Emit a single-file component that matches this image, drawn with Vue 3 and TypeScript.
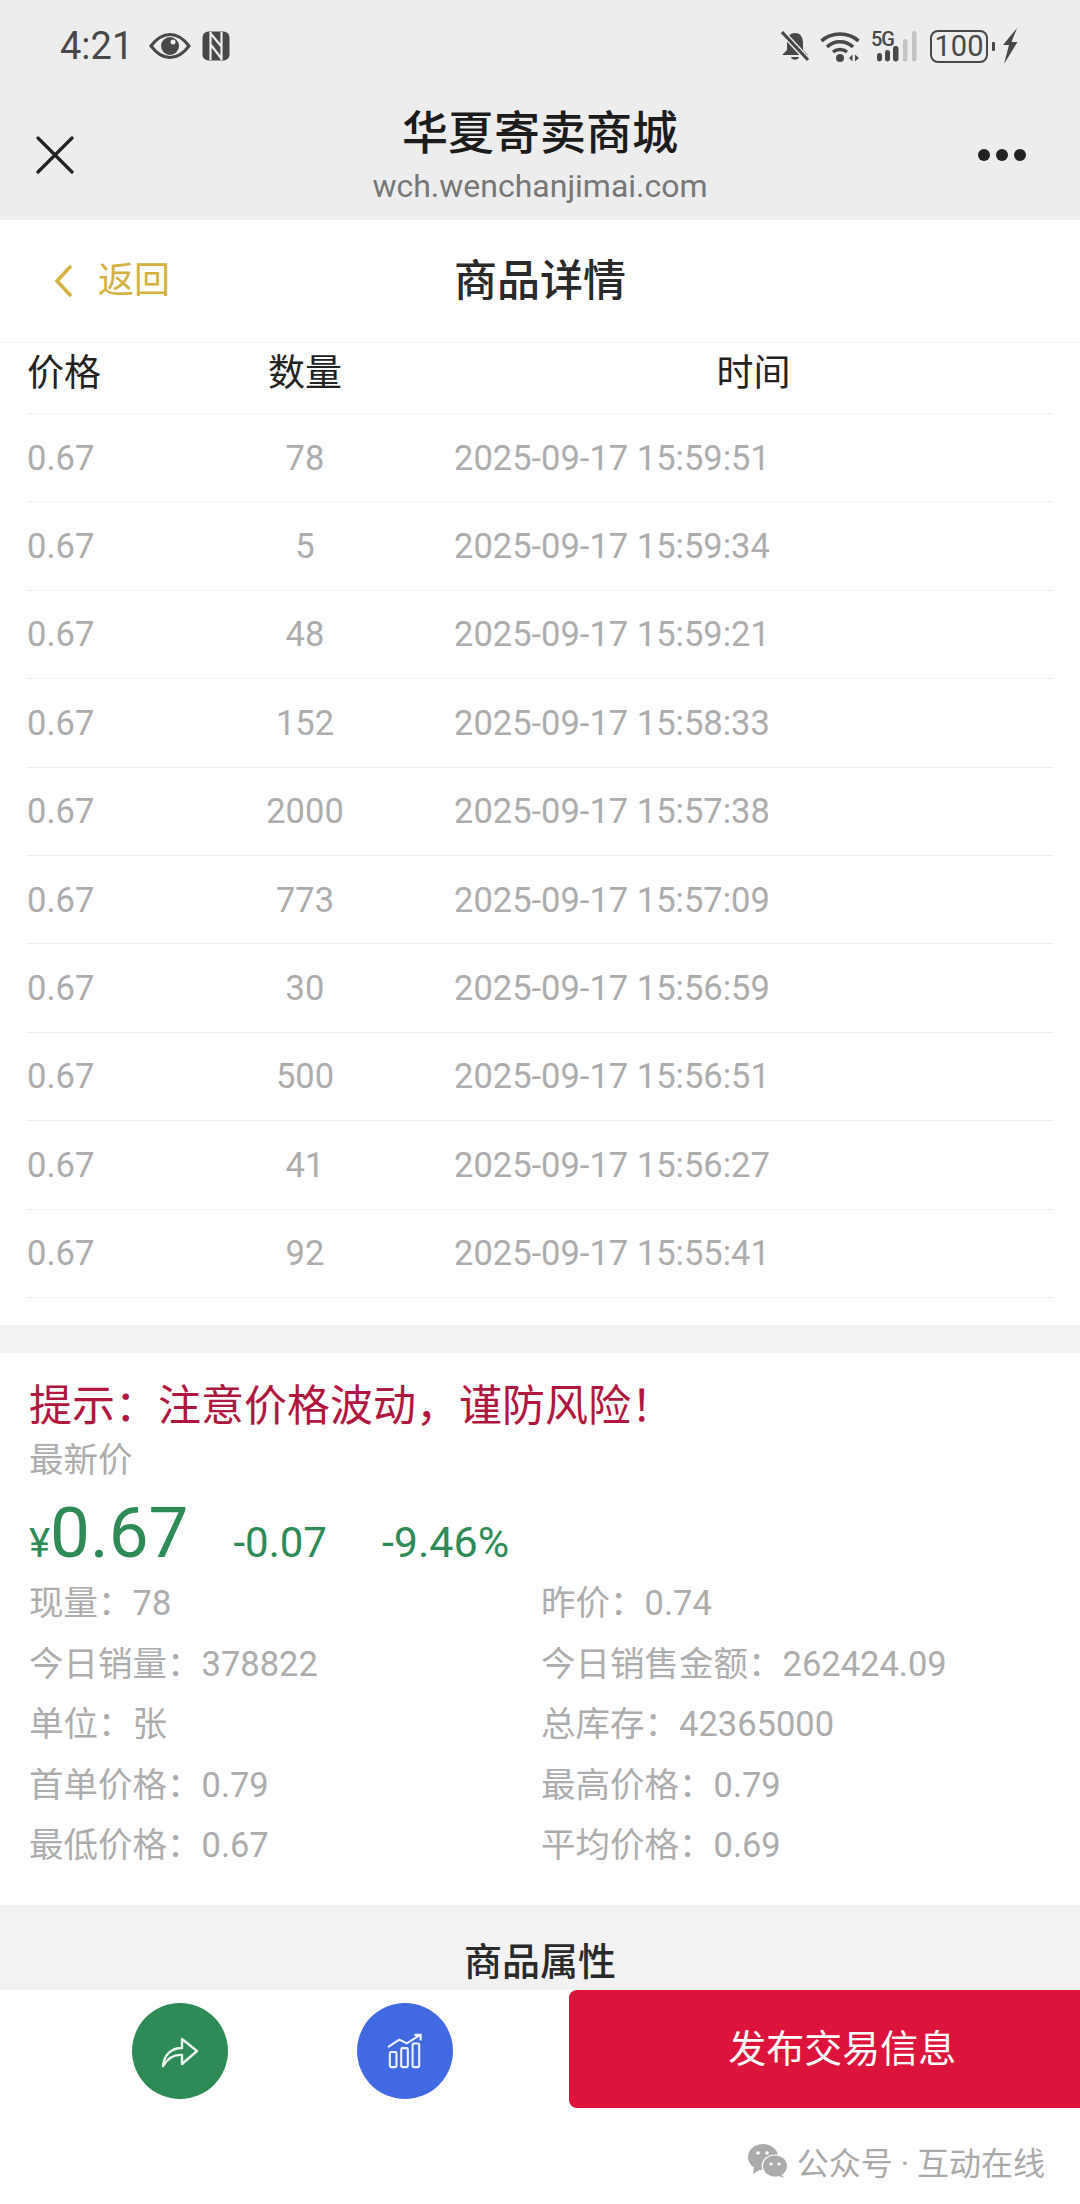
<template>
  <div class="page">
    <header class="wx-bar">
      <div class="status">
        <div class="status-left">
          <span class="clock">4:21</span>
          <svg class="ic-eye" viewBox="0 0 42 28">
            <path d="M2 14C8 6 14 2.500 21 2.500S34 6 40 14C34 22 28 25.500 21 25.500S8 22 2 14Z" fill="none" stroke="#484848" stroke-width="3"/>
            <circle cx="21" cy="14" r="9" fill="#484848"/>
            <circle cx="24" cy="10" r="2.500" fill="#ededed"/>
          </svg>
          <svg class="ic-nfc" viewBox="0 0 28 30">
            <rect x="0.500" y="0.500" width="27" height="29" rx="6" fill="#484848"/>
            <path d="M8.500 1V29M19.500 1V29M9 3L19 15M9 14L19 27" fill="none" stroke="#ededed" stroke-width="2.200"/>
          </svg>
        </div>
        <div class="status-right">
          <svg class="ic-bell" viewBox="0 0 28 30">
            <path d="M14 2C8 2 6 7 6 12V19L1 24H27L22 19V12C22 7 20 2 14 2Z" fill="#484848"/>
            <path d="M10 26H18C17.500 29.500 10.500 29.500 10 26Z" fill="#484848"/>
            <path d="M1 1L27 29" stroke="#ededed" stroke-width="6"/>
            <path d="M1 1L27 29" stroke="#484848" stroke-width="3"/>
          </svg>
          <svg class="ic-wifi" viewBox="0 0 40 31">
            <path d="M1.500 10C11 0.500 29 0.500 38.500 10" fill="none" stroke="#484848" stroke-width="3.500"/>
            <path d="M7 16C14 9 26 9 33 16" fill="none" stroke="#484848" stroke-width="3.500"/>
            <path d="M13 21C17 17.500 23 17.500 27 21" fill="none" stroke="#484848" stroke-width="3.500"/>
            <circle cx="20" cy="27" r="4" fill="#484848"/>
            <path d="M29 27L32.500 23.500V30.500ZM35 23.500L39 27L35 30.500Z" fill="#484848"/>
          </svg>
          <div class="net">
            <span class="net-label">5G</span>
            <svg class="ic-signal" viewBox="0 0 40 31">
              <rect x="0" y="22" width="5" height="8.500" rx="2.400" fill="#484848"/>
              <rect x="8" y="19" width="5" height="11.500" rx="2.400" fill="#484848"/>
              <rect x="16" y="15" width="5.500" height="15.500" rx="2.400" fill="#484848"/>
              <rect x="26" y="8" width="4.500" height="22.500" rx="2.200" fill="#c4c4c4"/>
              <rect x="35" y="0" width="4.500" height="30.500" rx="2.200" fill="#c4c4c4"/>
            </svg>
          </div>
          <span class="battery">100</span>
          <span class="battery-tip"></span>
          <svg class="ic-bolt" viewBox="0 0 16 36">
            <path d="M15 0L1 17H7L2 36L15.500 14H9.500L15 0Z" fill="#484848"/>
          </svg>
        </div>
      </div>
      <div class="wx-title">
        <svg class="ic-close" viewBox="0 0 38 38">
          <path d="M2 2L36 36M36 2L2 36" stroke="#222" stroke-width="3.200" stroke-linecap="round"/>
        </svg>
        <div class="wx-center">
          <div class="shop-name">华夏寄卖商城</div>
          <div class="shop-url">wch.wenchanjimai.com</div>
        </div>
        <div class="dots"><i></i><i></i><i></i></div>
      </div>
    </header>

    <nav class="nav">
      <div class="back">
        <svg class="ic-back" viewBox="0 0 20 34">
          <path d="M17 2L3 17L17 32" fill="none" stroke="#d3b23f" stroke-width="3.500"/>
        </svg>
        <span>返回</span>
      </div>
      <div class="nav-title">商品详情</div>
    </nav>

    <section class="trades">
      <div class="row row-head">
        <span>价格</span>
        <span class="c">数量</span>
        <span class="c">时间</span>
      </div>
      <div v-for="t in trades" :key="t.time" class="row">
        <span>0.67</span>
        <span class="c">{{ t.qty }}</span>
        <span>{{ t.time }}</span>
      </div>
    </section>

    <div class="gap"></div>

    <section class="quote">
      <div class="hint">提示：注意价格波动，谨防风险！</div>
      <div class="latest">最新价</div>
      <div class="price-line">
        <span class="yen">¥</span><span class="price">0.67</span>
        <span class="chg">-0.07</span>
        <span class="chg pct">-9.46%</span>
      </div>
      <div class="stats">
        <div v-for="s in stats" :key="s">{{ s }}</div>
      </div>
    </section>

    <section class="attr-head">商品属性</section>

    <footer class="actions">
      <div class="round green">
        <svg viewBox="0 0 40 36">
          <path d="M3 33C4 22 11 15 22 15V6L37 18L22 31V22C14 21 8 25 3 33Z" fill="none" stroke="#e9f4ec" stroke-width="2.400" stroke-linejoin="round"/>
        </svg>
      </div>
      <div class="round blue">
        <svg viewBox="0 0 40 38">
          <path d="M2 15L14 7L22 11L36 2M30 2H36.500V8" fill="none" stroke="#eef2ff" stroke-width="2.200"/>
          <rect x="4" y="20" width="7" height="16" rx="1.500" fill="none" stroke="#eef2ff" stroke-width="2.200"/>
          <rect x="16" y="16" width="7" height="20" rx="1.500" fill="none" stroke="#eef2ff" stroke-width="2.200"/>
          <rect x="28" y="11" width="7" height="25" rx="1.500" fill="none" stroke="#eef2ff" stroke-width="2.200"/>
        </svg>
      </div>
      <button class="publish">发布交易信息</button>
    </footer>

    <div class="mark">
      <svg class="ic-wechat" viewBox="0 0 42 36">
        <ellipse cx="16" cy="14" rx="15" ry="13" fill="#ababab"/>
        <path d="M7 24L6 31L14 26Z" fill="#ababab"/>
        <ellipse cx="28" cy="23" rx="13.500" ry="11.500" fill="#fff"/>
        <ellipse cx="28" cy="23" rx="12" ry="10.500" fill="#ababab"/>
        <path d="M34 31L37 35L29 32Z" fill="#ababab"/>
        <circle cx="11" cy="10" r="1.800" fill="#fff"/>
        <circle cx="20" cy="10" r="1.800" fill="#fff"/>
        <circle cx="24" cy="21" r="1.600" fill="#fff"/>
        <circle cx="32" cy="21" r="1.600" fill="#fff"/>
      </svg>
      <span>公众号 · 互动在线</span>
    </div>
  </div>
</template>

<script setup lang="ts">
interface Trade {
  qty: number
  time: string
}

const trades: Trade[] = [
  { qty: 78, time: '2025-09-17 15:59:51' },
  { qty: 5, time: '2025-09-17 15:59:34' },
  { qty: 48, time: '2025-09-17 15:59:21' },
  { qty: 152, time: '2025-09-17 15:58:33' },
  { qty: 2000, time: '2025-09-17 15:57:38' },
  { qty: 773, time: '2025-09-17 15:57:09' },
  { qty: 30, time: '2025-09-17 15:56:59' },
  { qty: 500, time: '2025-09-17 15:56:51' },
  { qty: 41, time: '2025-09-17 15:56:27' },
  { qty: 92, time: '2025-09-17 15:55:41' }
]

const stats: string[] = [
  '现量：78',
  '昨价：0.74',
  '今日销量：378822',
  '今日销售金额：262424.09',
  '单位：张',
  '总库存：42365000',
  '首单价格：0.79',
  '最高价格：0.79',
  '最低价格：0.67',
  '平均价格：0.69'
]
</script>

<style>
html,
body {
  margin: 0;
  background: #fff;
}
</style>

<style scoped>
.page {
  width: 1080px;
  height: 2204px;
  overflow: hidden;
  background: #fff;
  font-family: Roboto, 'Noto Sans CJK SC', sans-serif;
}

.wx-bar {
  height: 220px;
  background: #ededed;
  box-sizing: border-box;
  padding-top: 28px;
}

.status {
  display: flex;
  justify-content: space-between;
  align-items: center;
  height: 36px;
  padding: 0 62px 0 60px;
  color: #484848;
}

.status-left,
.status-right {
  display: flex;
  align-items: center;
}

.clock {
  font-size: 38px;
  margin-right: 16px;
}

.ic-eye {
  width: 42px;
  height: 28px;
  margin-right: 11px;
}

.ic-nfc {
  width: 28px;
  height: 30px;
}

.ic-bell {
  width: 28px;
  height: 30px;
  margin-right: 11px;
}

.ic-wifi {
  width: 40px;
  height: 31px;
  margin-right: 11px;
}

.net {
  position: relative;
  width: 46px;
  height: 31px;
  margin-right: 13px;
}

.net-label {
  position: absolute;
  left: 0;
  top: -2px;
  font-weight: 500;
  font-size: 20px;
  line-height: 20px;
  letter-spacing: -1px;
}

.ic-signal {
  position: absolute;
  right: 0;
  top: 0;
  width: 40px;
  height: 31px;
}

.battery {
  width: 58px;
  height: 33px;
  box-sizing: border-box;
  border: 2.500px solid #484848;
  border-radius: 8px;
  font-size: 29px;
  line-height: 28px;
  text-align: center;
}

.battery-tip {
  width: 3px;
  height: 9px;
  margin: 0 7px 0 4px;
  background: #484848;
  border-radius: 1px;
}

.ic-bolt {
  width: 16px;
  height: 36px;
}

.wx-title {
  display: grid;
  grid-template-columns: 1fr auto 1fr;
  align-items: center;
  padding: 38px 36px 0;
}

.ic-close {
  width: 38px;
  height: 38px;
}

.wx-center {
  text-align: center;
}

.shop-name {
  font-size: 46px;
  line-height: 62px;
  font-weight: 500;
  color: #1c1c1c;
}

.shop-url {
  font-size: 32px;
  line-height: 44px;
  color: #777;
}

.dots {
  display: flex;
  justify-self: end;
  gap: 6px;
  margin-right: 18px;
}

.dots i {
  width: 12px;
  height: 12px;
  border-radius: 50%;
  background: #222;
}

.nav {
  position: relative;
  height: 123px;
  padding-bottom: 8px;
  display: flex;
  align-items: center;
  justify-content: center;
  border-bottom: 1px solid #f3f3f3;
  box-sizing: border-box;
}

.back {
  position: absolute;
  left: 54px;
  top: 38px;
  display: flex;
  align-items: center;
  gap: 24px;
  font-size: 36px;
  line-height: 46px;
  color: #d3b23f;
}

.ic-back {
  width: 20px;
  height: 34px;
}

.nav-title {
  font-size: 43px;
  font-weight: 500;
  color: #2a2a2a;
}

.trades {
  padding: 0 27px;
  height: 982px;
  box-sizing: border-box;
}

.row {
  display: grid;
  grid-template-columns: 129px 298px 1fr;
  align-items: center;
  height: 88.400px;
  border-bottom: 1px solid #efefef;
  box-sizing: border-box;
  font-size: 34.500px;
  color: #adadad;
}

.row .c {
  text-align: center;
}

.row-head {
  height: 71px;
  padding-bottom: 17px;
  font-size: 37px;
  color: #222;
}

.gap {
  height: 28px;
  background: #f2f2f2;
}

.quote {
  height: 552px;
  box-sizing: border-box;
  padding: 26px 30px 0 29px;
}

.hint {
  font-size: 43px;
  line-height: 54px;
  color: #b0173f;
}

.latest {
  font-size: 34.500px;
  line-height: 46px;
  margin-top: 4px;
  color: #adadad;
}

.price-line {
  display: flex;
  align-items: baseline;
  height: 77px;
  margin-top: 10px;
  color: #2e8b57;
}

.yen {
  font-size: 40px;
}

.price {
  font-size: 71px;
  line-height: 80px;
  margin-right: 45px;
}

.chg {
  font-size: 42px;
  margin-right: 55px;
}

.pct {
  font-size: 43px;
}

.stats {
  display: grid;
  grid-template-columns: 512px 1fr;
  grid-auto-rows: 60.500px;
  align-items: center;
  font-size: 34.500px;
  color: #adadad;
}

.attr-head {
  height: 85px;
  background: #f2f2f2;
  text-align: center;
  font-size: 38px;
  line-height: 114px;
  font-weight: 500;
  color: #2a2a2a;
  overflow: hidden;
}

.actions {
  display: flex;
  align-items: flex-start;
  height: 118px;
  padding-left: 132px;
}

.round {
  width: 96px;
  height: 96px;
  margin-top: 13px;
  border-radius: 50%;
  display: flex;
  align-items: center;
  justify-content: center;
}

.round svg {
  width: 40px;
  height: 36px;
}

.green {
  background: #2e8b57;
}

.blue {
  background: #4169e1;
  margin-left: 129px;
}

.publish {
  width: 512px;
  height: 118px;
  margin-left: 116px;
  padding: 0 0 8px 36px;
  border: none;
  border-radius: 8px 0 0 8px;
  background: #dc143c;
  color: #fff;
  font-family: inherit;
  font-size: 38px;
}

.mark {
  display: flex;
  align-items: center;
  justify-content: flex-end;
  gap: 8px;
  margin-top: 30px;
  padding-right: 35px;
  font-size: 32px;
  color: #aaa;
}

.ic-wechat {
  width: 42px;
  height: 36px;
}
</style>
